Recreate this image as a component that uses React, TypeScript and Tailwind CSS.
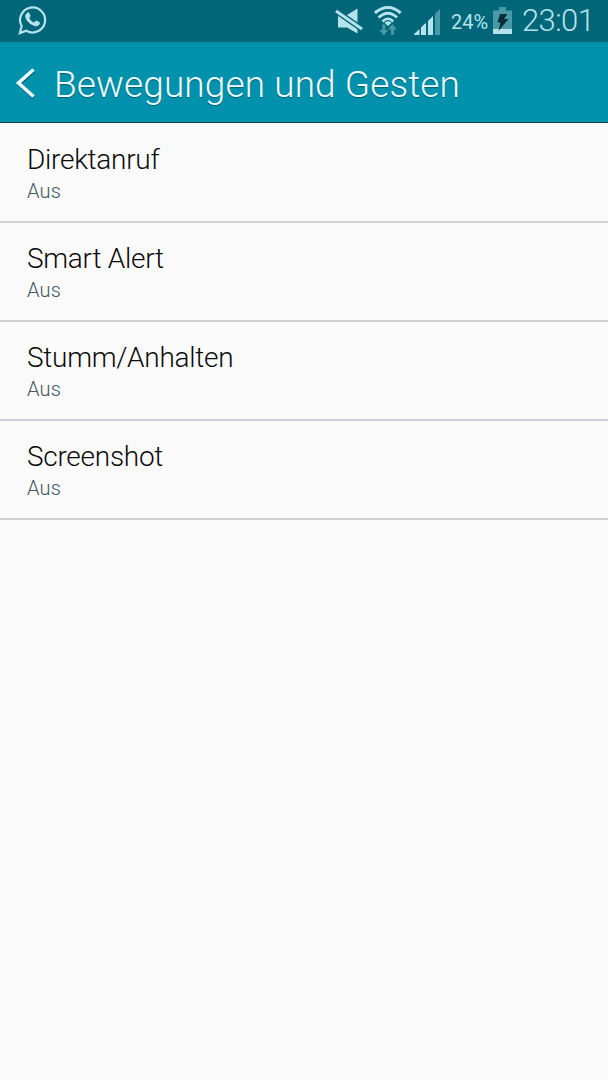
const items = ["Direktanruf", "Smart Alert", "Stumm/Anhalten", "Screenshot"];

function WhatsAppIcon() {
  return (
    <svg className="ml-[17px] h-[31px] w-[31px] shrink-0" viewBox="0 0 32 32" fill="none">
      <path d="M2.9 30.1l1.9-7.4a12.9 12.9 0 1 1 4.8 4.9z" stroke="#b5e3ec" strokeWidth="2.3" />
      <path d="M10.2 9.2c1.2-1 2.1-.8 2.6.3l1 2.4c.3.8-.1 1.3-1.2 2.6 1.1 2.2 2.7 3.7 5 4.7l1.5-1.6c.5-.5.9-.5 1.5-.2l2.4 1.2c.8.4.8.9.5 1.8-.8 2.1-3.2 2.9-5.4 2.2-4.5-1.4-7.4-4-9.1-7.7-.9-2.1-.6-4.3 1.2-5.7z" fill="#b5e3ec" />
    </svg>
  );
}

function MuteIcon() {
  return (
    <svg className="h-[28px] w-[30px]" viewBox="0 0 30 28">
      <path d="M3 8h9l10.500-6.500V26.500L12 20.500H3z" fill="#b5e3ec" />
      <path d="M0 3.300l29 20" stroke="#006678" strokeWidth="5.800" />
      <path d="M1 4l26 18" stroke="#b5e3ec" strokeWidth="2.900" />
    </svg>
  );
}

function WifiIcon() {
  return (
    <svg className="h-[31px] w-[30px]" viewBox="0 0 30 31" fill="none">
      <path d="M1.900 8Q15-3 27.600 8" stroke="#b5e3ec" strokeWidth="3" />
      <path d="M5.500 12.500Q15 4 24 12.500" stroke="#b5e3ec" strokeWidth="3" />
      <path d="M9.500 16.500Q15 11 20.200 16.500" stroke="#b5e3ec" strokeWidth="2.700" />
      <path d="M11.500 17.700Q15 14.800 18.500 17.700L15 21z" fill="#b5e3ec" />
      <path d="M9.400 19.500h2.800v5.500h3L10.800 30.500 6.400 25h3zM18 30v-5.500h-3l4.400-5.500 4.400 5.500h-3V30z" fill="#4a99a8" />
    </svg>
  );
}

function SignalIcon() {
  return (
    <svg className="h-[27px] w-[27px]" viewBox="0 0 27 27">
      <path d="M0 27v-1L5.500 21v6zM7 27v-7.500l5-4.700V27zM14 27V13l5-5v19z" fill="#b5e3ec" />
      <path d="M21 27V6l5-5v26z" fill="#4a99a8" />
    </svg>
  );
}

function BatteryIcon() {
  return (
    <svg className="h-[28px] w-[20px]" viewBox="0 0 20 28">
      <path d="M0 3.500h6V0h7v3.500h6V22H0z" fill="#4a99a8" />
      <path d="M0 22h19v5H0z" fill="#b5e3ec" />
      <path d="M7 7h7.500L11 12h4.500L5.500 24l2-8.500H4.500z" fill="#062d35" />
    </svg>
  );
}

export default function App() {
  return (
    <div className="flex h-[1080px] w-[608px] flex-col overflow-hidden bg-[#fafafa] font-['Roboto',sans-serif] font-light">
      <div className="flex h-[42px] items-start bg-[#006678] text-[#b5e3ec]">
        <div className="pt-[4px]"><WhatsAppIcon /></div>
        <div className="ml-[287px] pt-[7px]"><MuteIcon /></div>
        <div className="ml-[8px] pt-[5px]"><WifiIcon /></div>
        <div className="ml-[11px] pt-[8px]"><SignalIcon /></div>
        <span className="ml-[10px] w-[42px] whitespace-nowrap pt-[10px] text-[20px] leading-[24px] font-normal">24%</span>
        <div className="pt-[7px]"><BatteryIcon /></div>
        <span className="ml-[9px] whitespace-nowrap pt-[3px] text-[31px] leading-[36px] tracking-[-0.6px]">23:01</span>
      </div>
      <header className="flex h-[81px] shrink-0 items-center border-t border-b border-t-[#0c8ca2] border-b-[#123c46] bg-[#0092ad] text-[#effcff]">
        <svg className="ml-[15px] h-[32px] w-[20px]" viewBox="0 0 20 32" fill="none">
          <path d="M18.500 4.500L4 17.500 18.500 31" stroke="#075f70" strokeWidth="3" />
          <path d="M18.500 2.500L3.500 16 18.500 29.500" stroke="#effcff" strokeWidth="3.500" />
        </svg>
        <h1 className="ml-[19px] pt-[5px] whitespace-nowrap text-[37px] leading-[44px] tracking-[0.1px] [text-shadow:0_1px_1px_#075f70]">Bewegungen und Gesten</h1>
      </header>
      <main className="pt-px">
        {items.map((item) => (
          <section key={item} className="flex h-[99px] flex-col border-b-2 border-[#cbd1d4] pt-[19px] pl-[27px]">
            <h2 className="text-[28px] leading-[34px] tracking-[-0.28px] text-[#0b0b0b]">{item}</h2>
            <p className="mt-[2px] text-[20px] leading-[24px] tracking-[0.2px] text-[#425660]">Aus</p>
          </section>
        ))}
      </main>
    </div>
  );
}
